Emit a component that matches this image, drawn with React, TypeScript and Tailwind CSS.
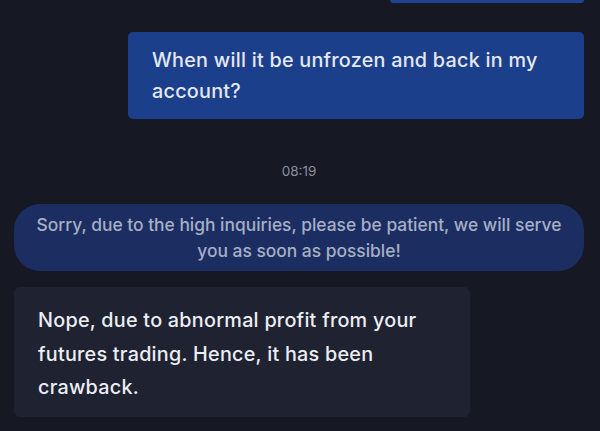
export default function App() {
  return (
    <div
      className="w-[600px] h-[431px] overflow-hidden bg-[#161824] flex flex-col pl-[14px] pr-[16px]"
      style={{ fontFamily: "Inter, 'Noto Sans', sans-serif" }}
    >
      <div className="self-end w-[194px] h-[3px] bg-[#1d4290] rounded-b-[3px] shrink-0" />
      <div className="self-end mt-[29px] w-[456px] h-[87px] bg-[#1b3f8b] rounded-[5px] px-[24px] pt-[13px] text-[19.8px] font-medium tracking-[0.25px] leading-[31px] text-[#e4e8f0] shrink-0">
        When will it be unfrozen and back in my account?
      </div>
      <div className="mt-[44px] text-center text-[13.5px] leading-[16px] text-[#8b909c] shrink-0">
        08:19
      </div>
      <div className="mt-[25px] w-[570px] h-[67px] bg-[#1c2d62] rounded-[26px] flex items-center justify-center text-center px-[16px] text-[17.4px] font-medium leading-[26px] text-[#a6afc5] shrink-0">
        Sorry, due to the high inquiries, please be patient, we will serve you as soon as possible!
      </div>
      <div className="mt-[16px] w-[456px] h-[130px] bg-[#1e2231] rounded-[6px] px-[24px] pt-[17px] text-[19.8px] font-medium tracking-[0.25px] leading-[33.5px] text-[#eceef3] shrink-0">
        Nope, due to abnormal profit from your futures trading. Hence, it has been crawback.
      </div>
    </div>
  );
}
